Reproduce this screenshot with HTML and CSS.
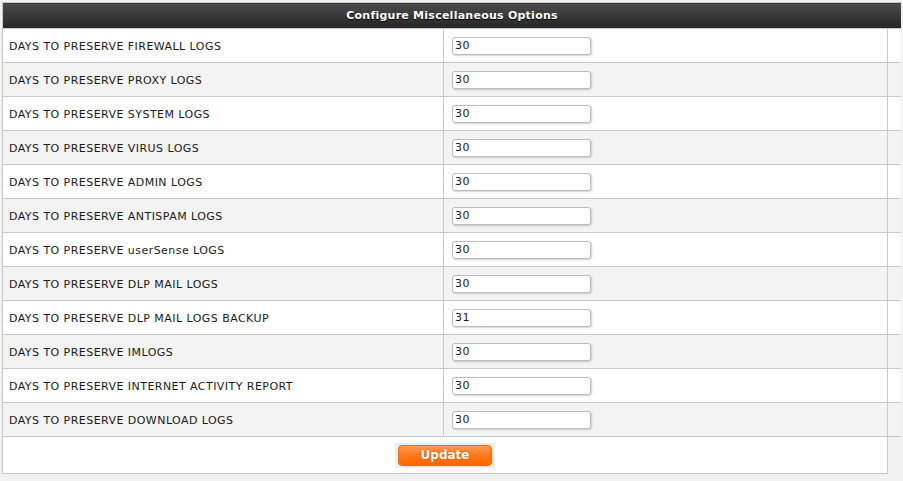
FILE: index.html
```html
<!DOCTYPE html>
<html lang="en">
<head>
  <meta charset="UTF-8" />
  <title>Configure Miscellaneous Options</title>
  <link rel="stylesheet" href="styles.css">
</head>
<body>
  <table class="options">
    <colgroup>
      <col class="c-label" />
      <col class="c-value" />
      <col class="c-pad" />
    </colgroup>
    <tr>
      <th colspan="3" class="title">Configure Miscellaneous Options</th>
    </tr>
    <tr>
      <td class="label">DAYS TO PRESERVE FIREWALL LOGS</td>
      <td class="value"><input type="text" value="30" /></td>
      <td></td>
    </tr>
    <tr>
      <td class="label">DAYS TO PRESERVE PROXY LOGS</td>
      <td class="value"><input type="text" value="30" /></td>
      <td></td>
    </tr>
    <tr>
      <td class="label">DAYS TO PRESERVE SYSTEM LOGS</td>
      <td class="value"><input type="text" value="30" /></td>
      <td></td>
    </tr>
    <tr>
      <td class="label">DAYS TO PRESERVE VIRUS LOGS</td>
      <td class="value"><input type="text" value="30" /></td>
      <td></td>
    </tr>
    <tr>
      <td class="label">DAYS TO PRESERVE ADMIN LOGS</td>
      <td class="value"><input type="text" value="30" /></td>
      <td></td>
    </tr>
    <tr>
      <td class="label">DAYS TO PRESERVE ANTISPAM LOGS</td>
      <td class="value"><input type="text" value="30" /></td>
      <td></td>
    </tr>
    <tr>
      <td class="label">DAYS TO PRESERVE userSense LOGS</td>
      <td class="value"><input type="text" value="30" /></td>
      <td></td>
    </tr>
    <tr>
      <td class="label">DAYS TO PRESERVE DLP MAIL LOGS</td>
      <td class="value"><input type="text" value="30" /></td>
      <td></td>
    </tr>
    <tr>
      <td class="label">DAYS TO PRESERVE DLP MAIL LOGS BACKUP</td>
      <td class="value"><input type="text" value="31" /></td>
      <td></td>
    </tr>
    <tr>
      <td class="label">DAYS TO PRESERVE IMLOGS</td>
      <td class="value"><input type="text" value="30" /></td>
      <td></td>
    </tr>
    <tr>
      <td class="label">DAYS TO PRESERVE INTERNET ACTIVITY REPORT</td>
      <td class="value"><input type="text" value="30" /></td>
      <td></td>
    </tr>
    <tr>
      <td class="label">DAYS TO PRESERVE DOWNLOAD LOGS</td>
      <td class="value"><input type="text" value="30" /></td>
      <td></td>
    </tr>
    <tr class="footer">
      <td colspan="2" class="actions">
        <span class="btn-wrap"><button type="submit" class="btn-update">Update</button></span>
      </td>
    </tr>
  </table>
</body>
</html>
```

FILE: styles.css
```css
* {
  box-sizing: border-box;
}

body {
  margin: 2px;
  background: #f1f1f1;
  font-family: "DejaVu Sans", Verdana, sans-serif;
  font-size: 11px;
  color: #1a1a1a;
}

.options {
  border-collapse: collapse;
  table-layout: fixed;
  width: 899px;
}

.c-label { width: 441px; }
.c-value { width: 444px; }
.c-pad { width: 14px; }

.options th,
.options td {
  border: 1px solid #c8c8c8;
  padding: 0;
}

.title {
  height: 26px;
  background: linear-gradient(#4b4b4b, #262626);
  color: #fff;
  font-weight: bold;
  font-size: 11px;
  letter-spacing: 0.25px;
  text-align: center;
  text-shadow: 0 1px 1px #000;
}

.options tr td {
  height: 34px;
  background: #fff;
}

.options tr:nth-child(odd) td {
  background: #f3f3f3;
}

.label {
  padding: 2px 0 0 6px !important;
  letter-spacing: 0.45px;
  white-space: nowrap;
}

.value {
  padding-left: 8px !important;
}

.value input {
  width: 139px;
  height: 18px;
  border: 1px solid #bcbcbc;
  border-radius: 3px;
  padding: 0 2px;
  font-family: "DejaVu Sans", Verdana, sans-serif;
  font-size: 11px;
  letter-spacing: 0.4px;
  color: #1a1a1a;
  background: #fff;
  box-shadow: 1px 1px 2px rgba(0, 0, 0, 0.18);
}

.options tr.footer td {
  height: 37px;
  background: #fff;
  text-align: center;
}

.btn-wrap {
  display: inline-block;
  background: #ececec;
  padding: 2px 3px;
  line-height: 0;
}

.btn-update {
  width: 94px;
  height: 21px;
  border: 1px solid #f06a10;
  border-radius: 4px;
  background: linear-gradient(#ff9d55, #ff7a1c 45%, #ff6600);
  color: #fff;
  font-family: "DejaVu Sans", Verdana, sans-serif;
  font-weight: bold;
  font-size: 12px;
  text-shadow: 0 0 2px #b44a00;
  cursor: pointer;
}
```
